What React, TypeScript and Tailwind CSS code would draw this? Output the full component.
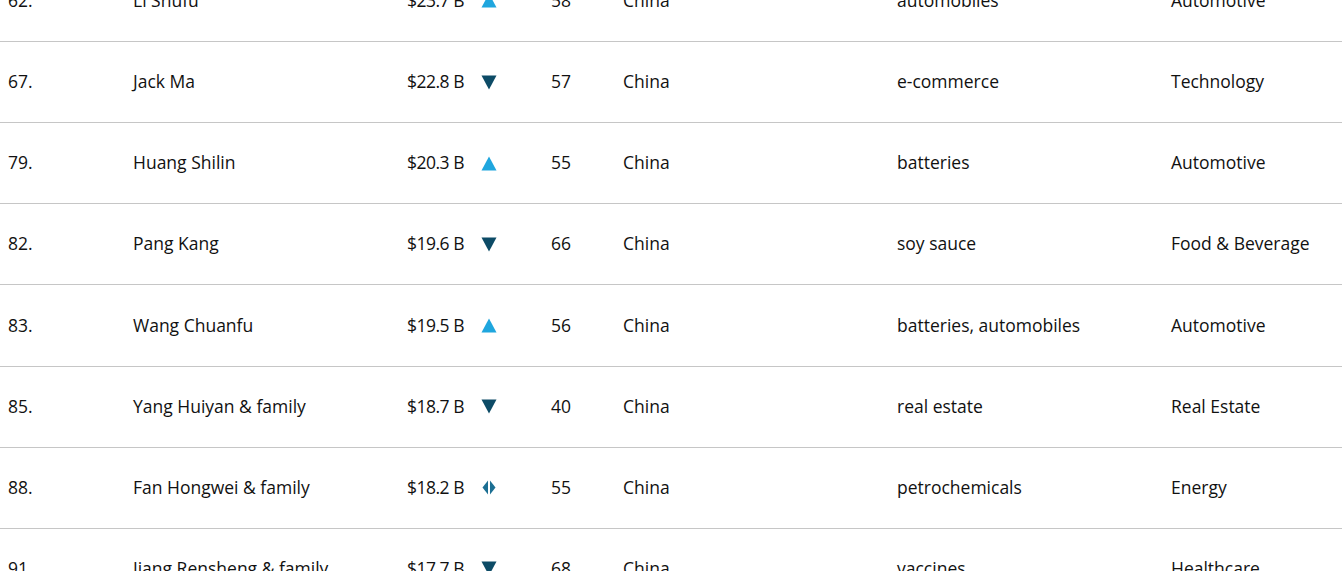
import React from 'react';

type Trend = 'up' | 'down' | 'flat';

type Person = {
    rank: number;
    name: string;
    worth: string;
    trend: Trend;
    age: number;
    country: string;
    source: string;
    industry: string;
};

const people: Person[] = [
    { rank: 62, name: 'Li Shufu', worth: '$23.7 B', trend: 'up', age: 58, country: 'China', source: 'automobiles', industry: 'Automotive' },
    { rank: 67, name: 'Jack Ma', worth: '$22.8 B', trend: 'down', age: 57, country: 'China', source: 'e-commerce', industry: 'Technology' },
    { rank: 79, name: 'Huang Shilin', worth: '$20.3 B', trend: 'up', age: 55, country: 'China', source: 'batteries', industry: 'Automotive' },
    { rank: 82, name: 'Pang Kang', worth: '$19.6 B', trend: 'down', age: 66, country: 'China', source: 'soy sauce', industry: 'Food & Beverage' },
    { rank: 83, name: 'Wang Chuanfu', worth: '$19.5 B', trend: 'up', age: 56, country: 'China', source: 'batteries, automobiles', industry: 'Automotive' },
    { rank: 85, name: 'Yang Huiyan & family', worth: '$18.7 B', trend: 'down', age: 40, country: 'China', source: 'real estate', industry: 'Real Estate' },
    { rank: 88, name: 'Fan Hongwei & family', worth: '$18.2 B', trend: 'flat', age: 55, country: 'China', source: 'petrochemicals', industry: 'Energy' },
    { rank: 91, name: 'Jiang Rensheng & family', worth: '$17.7 B', trend: 'down', age: 68, country: 'China', source: 'vaccines', industry: 'Healthcare' },
];

function TrendIcon({ trend }: { trend: Trend }) {
    if (trend === 'up') {
        return (
            <svg width="16" height="15" viewBox="0 0 16 15">
                <polygon points="8,0.5 15.5,14.5 0.5,14.5" fill="#1fa6de" />
            </svg>
        );
    }
    if (trend === 'down') {
        return (
            <svg width="16" height="15" viewBox="0 0 16 15">
                <polygon points="0.5,0.5 15.5,0.5 8,14.5" fill="#0d4b66" />
            </svg>
        );
    }
    return (
        <svg width="16" height="15" viewBox="0 0 16 15">
            <polygon points="7,0.5 7,14.5 1.5,7.5" fill="#1c6f93" />
            <polygon points="9,0.5 9,14.5 14.5,7.5" fill="#1c6f93" />
        </svg>
    );
}

export default function App() {
    return (
        <div className="min-h-screen overflow-hidden bg-white text-[17.5px] leading-6 font-medium text-[#111111]" style={{ fontFamily: '"Open Sans", sans-serif' }}>
            <div className="-mt-[39.2px]">
                {people.map((p) => (
                    <div
                        key={p.rank}
                        className="grid h-[81.17px] grid-cols-[125px_274px_74px_70px_72px_274px_274px_1fr] items-center border-b border-[#c6c6c6] pb-[2px] pl-2"
                    >
                        <span>{p.rank}.</span>
                        <span>{p.name}</span>
                        <span className="tracking-[-0.5px]">{p.worth}</span>
                        <span className="flex items-center pt-[2px]">
                            <TrendIcon trend={p.trend} />
                        </span>
                        <span>{p.age}</span>
                        <span>{p.country}</span>
                        <span>{p.source}</span>
                        <span>{p.industry}</span>
                    </div>
                ))}
            </div>
        </div>
    );
}
